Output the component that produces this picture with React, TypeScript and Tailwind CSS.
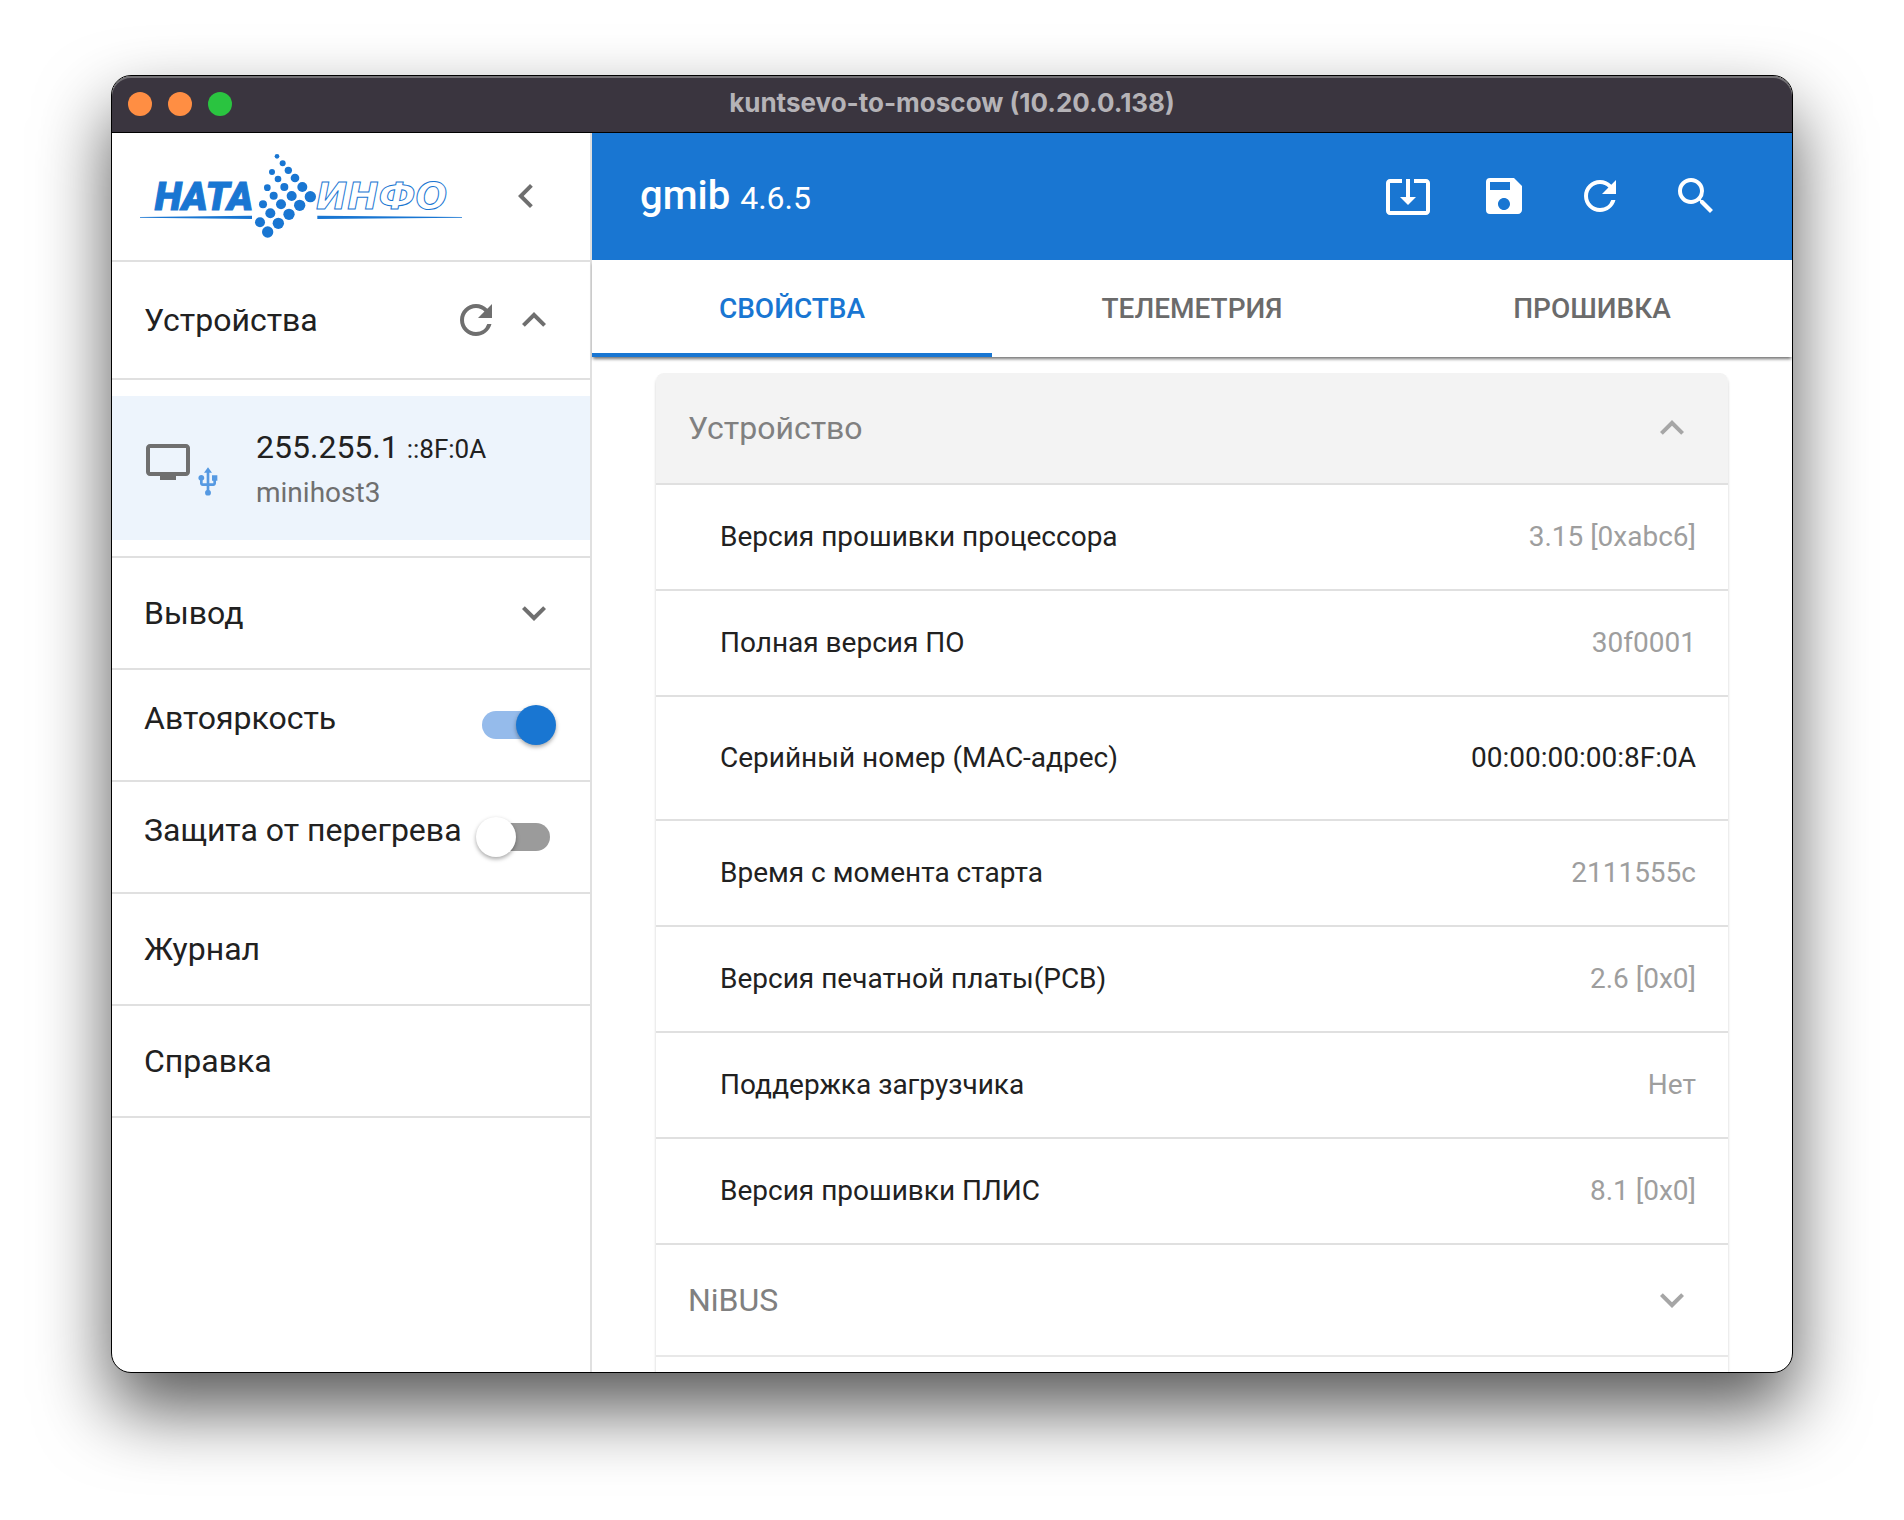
import React, { useState } from "react";
import {
  MdChevronLeft,
  MdExpandLess,
  MdExpandMore,
  MdRefresh,
  MdSave,
  MdSearch,
  MdSystemUpdateAlt,
  MdTv,
  MdUsb,
} from "react-icons/md";

const tabs = ["Свойства", "Телеметрия", "Прошивка"];

const properties = [
  { name: "Версия прошивки процессора", value: "3.15 [0xabc6]" },
  { name: "Полная версия ПО", value: "30f0001" },
  { name: "Серийный номер (MAC-адрес)", value: "00:00:00:00:8F:0A", editable: true },
  { name: "Время с момента старта", value: "2111555с" },
  { name: "Версия печатной платы(PCB)", value: "2.6 [0x0]" },
  { name: "Поддержка загрузчика", value: "Нет" },
  { name: "Версия прошивки ПЛИС", value: "8.1 [0x0]" },
];

// x, y, radius
const logoDots = [
  [531, 289, 7], [548, 310, 9], [565, 331, 11], [585, 354, 13], [607, 381, 15], [631, 410, 17],
  [516, 336, 9], [534, 357, 10], [553, 381, 12], [575, 408, 15], [599, 436, 17],
  [502, 383, 10], [521, 407, 12], [543, 433, 15], [567, 463, 17],
  [489, 433, 12], [511, 460, 15], [535, 490, 17],
  [480, 487, 15], [503, 516, 17],
];

const Logo = () => (
  <svg viewBox="120 276 966 264" className="w-[322px] h-[88px] shrink-0" fill="#1976d2" role="img" aria-label="НАТА-ИНФО">
    <text
      x="164"
      y="449"
      fontFamily="Roboto, sans-serif"
      fontSize="118"
      fontWeight="900"
      fontStyle="italic"
      stroke="#1976d2"
      strokeWidth="3"
    >
      НАТА
    </text>
    <text
      x="648"
      y="448"
      fontFamily="'DejaVu Sans', sans-serif"
      fontSize="112"
      fontWeight="700"
      fontStyle="italic"
      fill="none"
      stroke="#1976d2"
      strokeWidth="3"
    >
      ИНФО
    </text>
    {logoDots.map(([x, y, r]) => (
      <circle key={`${x}-${y}`} cx={x} cy={y} r={r} />
    ))}
    <path d="M120 471 L456 467 V477 L120 473Z" />
    <path d="M652 467 L1086 471 V473 L652 477Z" />
  </svg>
);

const IconButton = ({ label, children }: { label: string; children: React.ReactNode }) => (
  <button aria-label={label} className="p-6 rounded-full">
    {children}
  </button>
);

const SwitchRow = ({ label, initial }: { label: string; initial: boolean }) => {
  const [checked, setChecked] = useState(initial);

  return (
    <label className="flex h-28 justify-between border-b-2 border-[#e0e0e0] pl-8 pr-[34px] cursor-pointer">
      <span className="pt-6 whitespace-nowrap">{label}</span>
      <input
        type="checkbox"
        checked={checked}
        onChange={() => setChecked(!checked)}
        className="relative self-center h-10 w-20 shrink-0 appearance-none cursor-pointer before:absolute before:inset-1.5 before:rounded-full before:bg-[#9b9b9b] checked:before:bg-[#95bbeb] after:absolute after:left-0 after:top-0 after:size-10 after:rounded-full after:bg-white after:shadow-[0_2px_4px_rgba(0,0,0,0.35)] checked:after:left-10 checked:after:bg-[#1976d2]"
      />
    </label>
  );
};

const Sidebar = () => {
  const [open, setOpen] = useState(true);

  return (
    <aside className="w-[480px] shrink-0 border-r-2 border-[#e0e0e0] text-[32px] leading-[48px] text-[#212121]">
      <div className="flex items-center justify-between h-[130px] border-b-2 border-[#e0e0e0] pl-7 pr-4">
        <Logo />
        <IconButton label="Свернуть">
          <MdChevronLeft className="size-12 text-[#6f6f6f]" />
        </IconButton>
      </div>

      {/* Devices */}
      <div className="flex items-center h-[118px] border-b-2 border-[#e0e0e0] px-8">
        <span className="flex-1">Устройства</span>
        <div className="flex gap-2.5 text-[#6f6f6f]">
          <button aria-label="Обновить устройства">
            <MdRefresh className="size-12" />
          </button>
          <button aria-label="Показать устройства" onClick={() => setOpen(!open)}>
            {open ? <MdExpandLess className="size-12" /> : <MdExpandMore className="size-12" />}
          </button>
        </div>
      </div>
      {open && (
        <div className="py-4 border-b-2 border-[#e0e0e0]">
          <a href="#device" className="flex items-center gap-8 h-36 px-8 bg-[#edf4fc]">
            <div className="flex items-end">
              <MdTv className="size-12 mb-3 text-[#6f6f6f]" />
              <MdUsb className="size-8 text-[#5599e2]" />
            </div>
            <div>
              <p>
                255.255.1 <span className="text-[26px]">::8F:0A</span>
              </p>
              <p className="text-[28px] leading-10 text-[#6f6f6f]">minihost3</p>
            </div>
          </a>
        </div>
      )}

      <button className="flex items-center justify-between w-full h-28 border-b-2 border-[#e0e0e0] px-8">
        Вывод
        <MdExpandMore className="size-12 text-[#6f6f6f]" />
      </button>
      <SwitchRow label="Автояркость" initial={true} />
      <SwitchRow label="Защита от перегрева" initial={false} />
      <a href="#log" className="flex items-center h-28 border-b-2 border-[#e0e0e0] px-8">
        Журнал
      </a>
      <a href="#help" className="flex items-center h-28 border-b-2 border-[#e0e0e0] px-8">
        Справка
      </a>
    </aside>
  );
};

const Properties = () => {
  const [open, setOpen] = useState(true);

  return (
    <div className="rounded-t-lg shadow-[0_3px_3px_rgba(0,0,0,0.2)]">
      <button
        onClick={() => setOpen(!open)}
        className="flex items-center justify-between w-full h-28 rounded-t-lg border-b-2 border-[#e0e0e0] bg-[#f3f3f3] px-8 text-[32px] text-[#808080]"
      >
        Устройство
        {open ? (
          <MdExpandLess className="size-12 text-[#a6a6a6]" />
        ) : (
          <MdExpandMore className="size-12 text-[#a6a6a6]" />
        )}
      </button>
      {open && (
        <table className="w-full border-separate border-spacing-0 text-[28px] leading-10">
          <tbody>
            {properties.map((item) => (
              <tr key={item.name} className={item.editable ? "h-[124px]" : "h-[106px]"}>
                <th className="border-b-2 border-[#e0e0e0] pl-16 text-left font-normal text-[#212121]">
                  {item.name}
                </th>
                <td
                  className={`border-b-2 border-[#e0e0e0] pr-8 text-right ${
                    item.editable ? "text-[#212121]" : "text-[#9e9e9e]"
                  }`}
                >
                  {item.value}
                </td>
              </tr>
            ))}
          </tbody>
        </table>
      )}
      <button className="flex items-center justify-between w-full h-28 border-b-2 border-[#e8e8e8] px-8 text-[32px] text-[#808080]">
        NiBUS
        <MdExpandMore className="size-12 text-[#a6a6a6]" />
      </button>
      <div className="h-28" />
    </div>
  );
};

export default function App() {
  const [tab, setTab] = useState(0);

  return (
    <div className="h-screen bg-white px-[111px] pt-[75px] pb-[147px] font-['Roboto',sans-serif]">
      <div className="flex flex-col h-full overflow-hidden rounded-[20px] border border-black bg-white shadow-[0_36px_72px_rgba(0,0,0,0.66)]">
        {/* Title bar */}
        <div className="relative flex items-center justify-center h-14 shrink-0 rounded-t-[19px] bg-[#3a353f] shadow-[inset_0_2px_0_#747276,0_1px_0_#000]">
          <div className="absolute left-4 flex gap-4">
            <span className="size-6 rounded-full bg-[#ff8e43]" />
            <span className="size-6 rounded-full bg-[#ff8e43]" />
            <span className="size-6 rounded-full bg-[#2ac440]" />
          </div>
          <h1 className="pb-0.5 text-[26px] leading-8 font-bold text-[#b5b3b7] font-['Inter',sans-serif]">
            kuntsevo-to-moscow (10.20.0.138)
          </h1>
        </div>

        <div className="flex flex-1 min-h-0">
          <Sidebar />

          <main className="flex flex-col flex-1 min-w-0">
            <header className="flex items-center justify-between h-32 shrink-0 bg-[#1976d2] px-12 text-white">
              <h2 className="pt-0.5 text-[40px] leading-[64px] font-medium">
                gmib <span className="text-[32px] font-normal">4.6.5</span>
              </h2>
              <div className="flex">
                <IconButton label="Загрузить">
                  <MdSystemUpdateAlt className="size-12" />
                </IconButton>
                <IconButton label="Сохранить">
                  <MdSave className="size-12" />
                </IconButton>
                <IconButton label="Обновить">
                  <MdRefresh className="size-12" />
                </IconButton>
                <IconButton label="Поиск">
                  <MdSearch className="size-12" />
                </IconButton>
              </div>
            </header>

            <nav className="grid grid-cols-3 h-[97px] shrink-0 shadow-[0_3px_3px_-1px_rgba(0,0,0,0.55)]">
              {tabs.map((name, i) => (
                <button
                  key={name}
                  onClick={() => setTab(i)}
                  className={`border-y-4 border-t-transparent text-[28px] font-medium uppercase ${
                    tab === i ? "border-b-[#1976d2] text-[#1976d2]" : "border-b-transparent text-[#6b6b6b]"
                  }`}
                >
                  {name}
                </button>
              ))}
            </nav>

            <div className="flex-1 min-h-0 overflow-hidden px-16 pt-4">
              <Properties />
            </div>
          </main>
        </div>
      </div>
    </div>
  );
}
